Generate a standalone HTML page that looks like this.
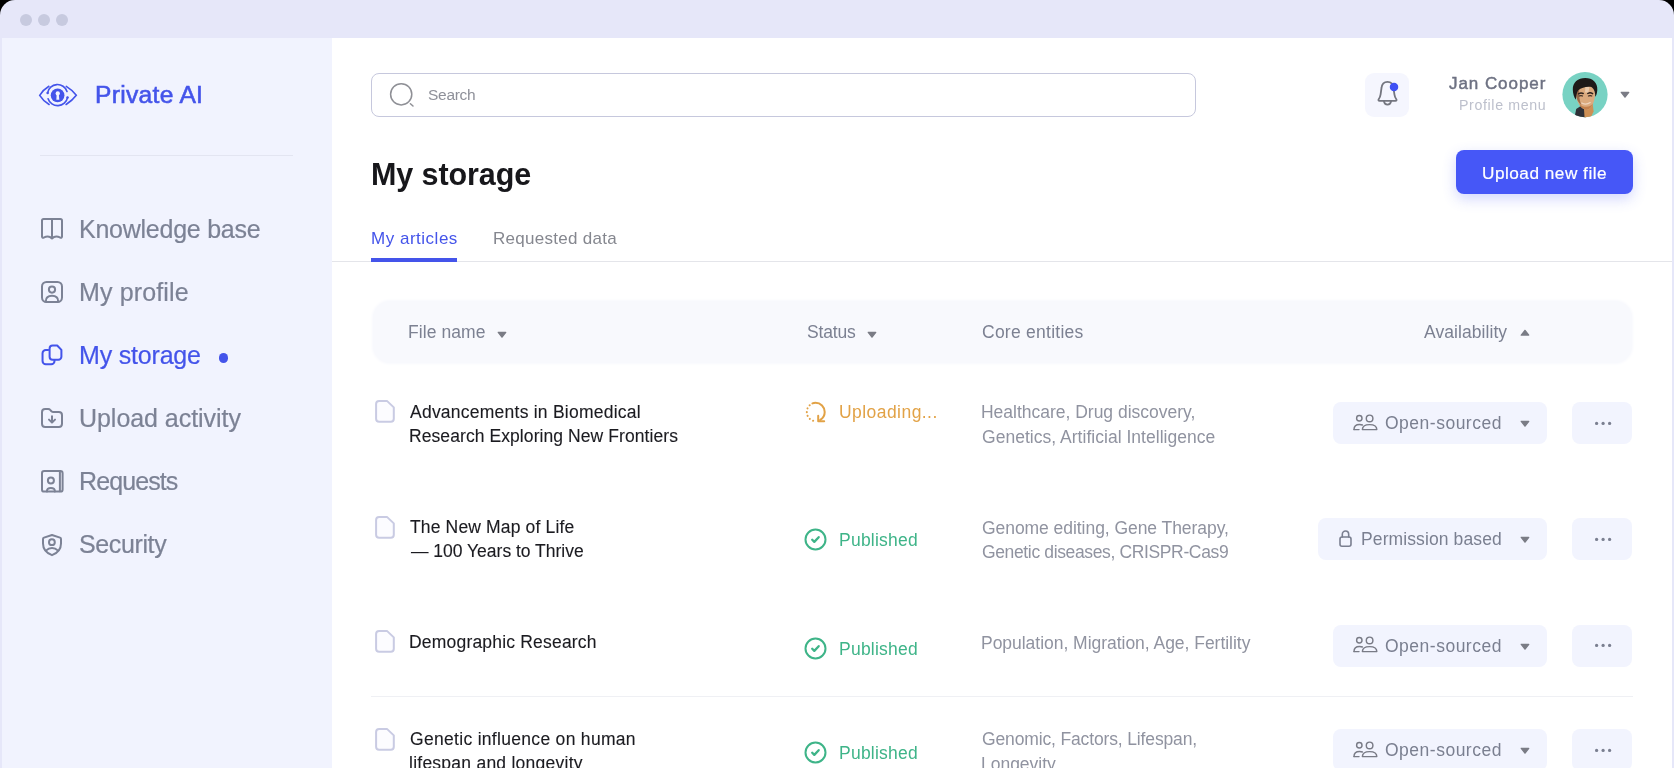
<!DOCTYPE html>
<html lang="en">
<head>
<meta charset="utf-8">
<title>Private AI – My storage</title>
<style>
*{box-sizing:border-box}
html,body{margin:0;padding:0}
body{width:1674px;height:768px;overflow:hidden;background:#000;font-family:"Liberation Sans",Arial,sans-serif;-webkit-font-smoothing:antialiased}
.window{position:absolute;left:0;top:0;width:1674px;height:820px;background:#E6E7F9;border-radius:15px 15px 0 0;overflow:hidden}
.titlebar i{position:absolute;top:14px;width:12px;height:12px;border-radius:50%;background:#C7CADF}
.sidebar{position:absolute;left:2px;top:38px;width:330px;height:800px;background:#F1F3FE}
.main{position:absolute;left:332px;top:38px;width:1340px;height:800px;background:#fff}
.t{position:absolute;white-space:pre;line-height:1;margin:0;font-weight:400;will-change:transform}
.abs,svg.i{position:absolute;display:block;overflow:visible}
.med{-webkit-text-stroke:0.45px currentColor}
.nv{-webkit-text-stroke:0.2px currentColor;text-decoration:none}
.nm{-webkit-text-stroke:0.12px currentColor}
.med2{-webkit-text-stroke:0.6px currentColor}
button{border:0;padding:0;margin:0;font:inherit}
.chip{position:absolute;background:#F2F4FE;border-radius:8px}
</style>
</head>
<body>
<div class="window">
<div class="titlebar"><i style="left:20px"></i><i style="left:38px"></i><i style="left:56px"></i></div>
<aside class="sidebar">
<svg class="i" style="left:35.5px;top:45px" width="40" height="24" viewBox="0 0 40 24" fill="none">
<g stroke="#4454EA" stroke-width="1.6" stroke-linecap="round" fill="none">
<path d="M10.9 3.3C7 5.7 3.9 8.7 1.7 12.3C3.9 15.9 7 18.9 11.1 21.5"/>
<path d="M28.3 3.4C32.2 5.8 35.8 8.9 38.3 12.3C35.8 15.7 32.2 18.8 28.1 21.5"/>
<path d="M9.6 9.9A10 9.85 0 0 1 29 8.4"/>
<path d="M29.5 14.6A10 9.85 0 0 1 10.1 15.7"/>
</g>
<circle cx="9.6" cy="9.9" r="1.25" fill="#4454EA"/><circle cx="29.5" cy="14.6" r="1.25" fill="#4454EA"/>
<circle cx="19.6" cy="12.3" r="6.85" fill="#4454EA"/>
<circle cx="19.75" cy="10.5" r="2.15" fill="#F1F3FE"/><path d="M18.7 11.2L18.3 16.7H21.3L20.8 11.2Z" fill="#F1F3FE"/>
</svg>
<span class="t med2" style="left:92.98px;top:45px;font-size:24.6px;color:#4454EA;letter-spacing:0.300px;">Private AI</span>
<div class="abs" style="left:38px;top:117px;width:253px;height:1px;background:#E3E5F1"></div>
<nav>
<svg class="i" style="left:38px;top:179px" width="24" height="24" viewBox="0 0 24 24" fill="none"><g stroke="#7C8295" stroke-width="2" stroke-linecap="round" stroke-linejoin="round"><path d="M3.6 2.1H20.4C21.3 2.1 22 2.8 22 3.7V19.5C22 20.5 21.2 21.1 20.3 20.7C17.6 19.3 14 19.5 12 21.4C10 19.5 6.4 19.3 3.7 20.7C2.8 21.1 2 20.5 2 19.5V3.7C2 2.8 2.7 2.1 3.6 2.1ZM12 2.1V21.2"/></g></svg>
<a class="t nv" style="left:76.55px;top:179px;font-size:25px;color:#7C8295;letter-spacing:-0.246px;">Knowledge base</a>
<svg class="i" style="left:38px;top:242px" width="24" height="24" viewBox="0 0 24 24" fill="none"><g stroke="#7C8295" stroke-width="2" stroke-linecap="round" stroke-linejoin="round"><rect x="2" y="2" width="20" height="20" rx="4.5"/><circle cx="12" cy="9.6" r="3.1"/><path d="M5.8 21.4C5.8 17.6 8.4 15.8 12 15.8S18.2 17.6 18.2 21.4"/></g></svg>
<a class="t nv" style="left:76.55px;top:242px;font-size:25px;color:#7C8295;letter-spacing:0.134px;">My profile</a>
<svg class="i" style="left:38px;top:305px" width="24" height="24" viewBox="0 0 24 24" fill="none"><g stroke="#4454EA" stroke-width="2" stroke-linecap="round" stroke-linejoin="round"><path d="M8.2 7H5.8C4 7 2.55 8.45 2.55 10.25V18.05C2.55 19.85 4 21.3 5.8 21.3H11.25C13.05 21.3 14.5 19.85 14.5 18.05V17.4"/><path d="M12.6 2.5H17.2L21.4 6.9V13.7C21.4 15.4 20 16.75 18.4 16.75H12.6C10.9 16.75 9.6 15.4 9.6 13.7V5.5C9.6 3.8 10.9 2.5 12.6 2.5Z"/></g></svg>
<a class="t nv" style="left:76.55px;top:305px;font-size:25px;color:#4454EA;letter-spacing:-0.188px;">My storage</a>
<svg class="i" style="left:38px;top:368.3px" width="24" height="24" viewBox="0 0 24 24" fill="none"><g stroke="#7C8295" stroke-width="2" stroke-linecap="round" stroke-linejoin="round"><path d="M2 6.2C2 4.4 3.4 3 5.2 3H8.2C9 3 9.7 3.3 10.2 3.9L11.4 5.2C11.9 5.8 12.6 6.1 13.4 6.1H18.8C20.6 6.1 22 7.5 22 9.3V17.8C22 19.6 20.6 21 18.8 21H5.2C3.4 21 2 19.6 2 17.8Z"/><path d="M12 10.2V16.4M9 13.6L12 16.6L15 13.6"/></g></svg>
<a class="t nv" style="left:76.94px;top:368px;font-size:25px;color:#7C8295;letter-spacing:-0.044px;">Upload activity</a>
<svg class="i" style="left:38px;top:431px" width="24" height="24" viewBox="0 0 24 24" fill="none"><g stroke="#7C8295" stroke-width="2" stroke-linecap="round" stroke-linejoin="round"><rect x="2" y="2" width="20.6" height="20.6" rx="2.2"/><path d="M19.9 2.4V22.2"/><circle cx="10.9" cy="11.6" r="3"/><path d="M7 22.4V21.8C7 20 8.6 19 10.9 19S14.8 20 14.8 21.8V22.4"/></g></svg>
<a class="t nv" style="left:76.55px;top:431px;font-size:25px;color:#7C8295;letter-spacing:-0.897px;">Requests</a>
<svg class="i" style="left:38px;top:494.6px" width="24" height="24" viewBox="0 0 24 24" fill="none"><g stroke="#7C8295" stroke-width="2" stroke-linecap="round" stroke-linejoin="round"><path d="M12 2L20 4.6C20.6 4.8 21 5.3 21 5.9V10.4C21 15.8 17.8 19.8 12 22.2C6.2 19.8 3 15.8 3 10.4V5.9C3 5.3 3.4 4.8 4 4.6Z"/><circle cx="11.9" cy="9.2" r="2.9"/><path d="M6.3 17.4C7.8 15.8 9.6 15 12 15S16.2 15.8 17.7 17.4"/></g></svg>
<a class="t nv" style="left:76.52px;top:494px;font-size:25px;color:#7C8295;letter-spacing:-0.375px;">Security</a>
<div class="abs" style="left:217px;top:315.3px;width:9.4px;height:9.4px;border-radius:50%;background:#4454EA"></div>
</nav>
</aside>
<main class="main">
<header>
<div class="abs" style="left:39px;top:35px;width:824.5px;height:44px;border:1px solid #C6C8DD;border-radius:8px;background:#fff"></div>
<svg class="i" style="left:56px;top:43px" width="28" height="28" viewBox="0 0 28 28" fill="none"><circle cx="13.2" cy="13.3" r="10.6" stroke="#8F9096" stroke-width="1.5"/><path d="M22.4 22.7L25 25" stroke="#8F9096" stroke-width="1.5" stroke-linecap="round"/></svg>
<span class="t" style="left:96.22px;top:49px;font-size:15.5px;color:#8E9099;letter-spacing:-0.291px;">Search</span>
<div class="abs" style="left:1033px;top:34.5px;width:44px;height:44px;background:#F5F6FE;border-radius:9px"></div>
<svg class="i" style="left:1043px;top:41px" width="26" height="30" viewBox="0 0 26 30" fill="none"><g stroke="#74767F" stroke-width="1.8" stroke-linecap="round" stroke-linejoin="round"><path d="M12.5 2.9C8.9 2.9 6.9 5.6 6.5 9L5.6 15.4C5.3 17.6 4.6 19 3.7 20.2C3.1 21 3.5 21.8 4.5 21.8H20.5C21.5 21.8 21.9 21 21.3 20.2C20.4 19 19.7 17.6 19.4 15.4L18.5 9C18.1 5.6 16.1 2.9 12.5 2.9Z"/><path d="M8.9 22.2C9.3 24.7 10.8 25.7 12.5 25.7S15.7 24.7 16.1 22.2"/></g><circle cx="19" cy="8.1" r="4.25" fill="#3F51F4"/></svg>
<span class="t med" style="left:1116.63px;top:37px;font-size:17px;color:#6D7182;letter-spacing:0.940px;">Jan Cooper</span>
<span class="t" style="left:1127.19px;top:60px;font-size:14.2px;color:#BDC0CC;letter-spacing:0.636px;">Profile menu</span>
<svg class="i" style="left:1230px;top:33.5px" width="46" height="46" viewBox="0 0 46 46" fill="none"><defs><clipPath id="av"><circle cx="23" cy="22.6" r="22.6"/></clipPath></defs>
<g clip-path="url(#av)"><rect width="46" height="46" fill="#78D2C3"/>
<path d="M12.4 46L14.2 37L21.8 32L24 46Z" fill="#2F3037"/>
<path d="M21.6 31H30.6L31.6 39.5L28.6 46H22.6Z" fill="#CE9055"/>
<path d="M14 22C14 15 18 12.6 23.6 12.6S33 15 33 22C33 30 29 37.8 24.6 37.8C19.4 37.8 14 30 14 22Z" fill="#DBAA7E"/>
<path d="M14 22C14 17 15.6 14.6 18 13.6C16.6 18 16.6 27 19.6 33.6C16 30.6 14 26 14 22Z" fill="#9A6A48"/>
<path d="M24.6 37.8C22 37.8 19 35.6 17 32C19.4 34 21.6 34.8 24.4 34.8S29 34 31 31.6C29.6 35.4 27 37.8 24.6 37.8Z" fill="#C4824E"/>
<path d="M10.8 17.6C10.6 10.4 16 6.1 23.2 6.1C30.6 6.1 35.7 10.6 35.3 18C35.1 21.4 34.3 23.8 33.2 24.8C33.4 20.6 32.4 17.4 29.8 15.2C25.6 14 19.6 15.6 16.2 18.2C14.6 20.4 14.2 24 13.9 27.8C12 25.4 10.9 21.6 10.8 17.6Z" fill="#1E1A19"/>
<path d="M16.6 21.8Q18.8 20.4 21.2 21.5M25.8 21.4Q28.2 20.2 30.6 21.6" stroke="#2B211C" stroke-width="1.5" stroke-linecap="round"/>
<path d="M17.2 24Q19 23.2 20.6 24M26.4 24Q28.2 23.2 29.8 24" stroke="#3A2A22" stroke-width="1.1" stroke-linecap="round"/>
<path d="M19.8 31Q24 33.6 28.2 30.6" stroke="#EFD5BF" stroke-width="1.2" stroke-linecap="round"/>
<path d="M23.4 15L27.4 15L26.4 20.4L23 20.4Z" fill="#F0D6BC" opacity=".75"/>
</g></svg>
<svg class="i" style="left:1287.8px;top:53.05px" width="10" height="7.5" viewBox="0 0 10 7.5" fill="none"><path d="M1.3 1.4H8.7L5 6.1Z" fill="#7A7C85" stroke="#7A7C85" stroke-width="1.4" stroke-linejoin="round"/></svg>
</header>
<h1 class="t" style="left:38.99px;top:121px;font-size:30.5px;color:#17171B;letter-spacing:-0.095px;font-weight:700;">My storage</h1>
<button class="abs btn" style="left:1124px;top:112px;width:177px;height:44px;background:#4657F7;border-radius:8px;box-shadow:0 5px 14px rgba(70,87,247,.24)"><span class="t nv" style="left:26.13px;top:15px;font-size:17.2px;color:#FFFFFF;letter-spacing:0.505px;">Upload new file</span></button>
<span class="t" style="left:38.97px;top:192px;font-size:17px;color:#4454EA;letter-spacing:0.513px;">My articles</span>
<span class="t" style="left:160.67px;top:192px;font-size:17px;color:#85878F;letter-spacing:0.291px;">Requested data</span>
<div class="abs" style="left:0px;top:223px;width:1340px;height:1px;background:#E4E5EA"></div>
<div class="abs" style="left:39px;top:220px;width:86.3px;height:4px;background:#4454EA"></div>
<section class="table">
<div class="abs thead" style="left:41px;top:262.5px;width:1258.5px;height:62.5px;background:#F8F9FD;border-radius:17px;box-shadow:0 0 3px 1px #F8F9FD"></div>
<span class="t" style="left:75.63px;top:286px;font-size:17.5px;color:#7C8192;letter-spacing:0.080px;">File name</span>
<span class="t" style="left:474.85px;top:286px;font-size:17.5px;color:#7C8192;letter-spacing:-0.164px;">Status</span>
<span class="t" style="left:650.28px;top:286px;font-size:17.5px;color:#7C8192;letter-spacing:0.252px;">Core entities</span>
<span class="t" style="left:1091.80px;top:286px;font-size:17.5px;color:#7C8192;letter-spacing:0.068px;">Availability</span>
<svg class="i" style="left:165px;top:292.65px" width="10" height="7.5" viewBox="0 0 10 7.5" fill="none"><path d="M1.3 1.4H8.7L5 6.1Z" fill="#7A7C85" stroke="#7A7C85" stroke-width="1.4" stroke-linejoin="round"/></svg>
<svg class="i" style="left:534.9px;top:292.75px" width="10" height="7.5" viewBox="0 0 10 7.5" fill="none"><path d="M1.3 1.4H8.7L5 6.1Z" fill="#7A7C85" stroke="#7A7C85" stroke-width="1.4" stroke-linejoin="round"/></svg>
<svg class="i" style="left:1188.3px;top:290.75px" width="10" height="7.5" viewBox="0 0 10 7.5" fill="none"><path d="M1.3 6.1H8.7L5 1.4Z" fill="#7A7C85" stroke="#7A7C85" stroke-width="1.4" stroke-linejoin="round"/></svg>
<article class="row">
<svg class="i" style="left:43.4px;top:361.6px" width="20" height="24" viewBox="0 0 20 24" fill="none"><path d="M4.1 1.1H12.2L18.8 7.4V18.8C18.8 20.5 17.5 21.8 15.8 21.8H4.1C2.4 21.8 1.1 20.5 1.1 18.8V4.1C1.1 2.4 2.4 1.1 4.1 1.1Z" fill="#FCFCFF" stroke="#C9CBE3" stroke-width="2" stroke-linejoin="round"/></svg>
<span class="t nm" style="left:78.40px;top:366px;font-size:17.5px;color:#1B1B20;letter-spacing:0.238px;">Advancements in Biomedical</span>
<span class="t nm" style="left:77.43px;top:390px;font-size:17.5px;color:#1B1B20;letter-spacing:0.078px;">Research Exploring New Frontiers</span>
<svg class="i" style="left:473.3px;top:362.5px" width="22" height="22" viewBox="0 0 22 22" fill="none"><g stroke="#E2A246" stroke-width="2" stroke-linecap="round" stroke-linejoin="round"><path d="M7.4 2.4C8.4 2 9.4 1.8 10.5 1.8C15.6 1.8 19.7 5.9 19.7 11C19.7 14.4 17.9 17.3 15.2 18.9"/><path d="M13.2 14.8V20.2H19.2"/><path d="M4.7 4.2C2.9 5.9 1.8 8.3 1.8 11C1.8 15.6 5.1 19.4 9.5 20.1" stroke-dasharray="0.1 3.7"/></g></svg>
<span class="t" style="left:507.11px;top:366px;font-size:17.5px;color:#E2A246;letter-spacing:0.444px;">Uploading...</span>
<span class="t" style="left:649.13px;top:366px;font-size:17.5px;color:#9093A0;letter-spacing:-0.013px;">Healthcare, Drug discovery,</span>
<span class="t" style="left:649.68px;top:391px;font-size:17.5px;color:#9093A0;letter-spacing:0.025px;">Genetics, Artificial Intelligence</span>
<button class="chip" style="left:1001.4px;top:364.1px;width:213.4px;height:42.3px;"><svg class="i" style="left:19.4px;top:11.5px" width="25" height="17" viewBox="0 0 25 17" fill="none"><g stroke="#797B86" stroke-width="1.45" stroke-linecap="round" stroke-linejoin="round"><circle cx="6.3" cy="4.2" r="2.7"/><circle cx="16.6" cy="4.4" r="3.3"/><path d="M9.4 15.6C9.4 12.2 12.4 10.6 16.6 10.6S23.8 12.2 23.8 15.6Z"/><path d="M1 15.6C1 12.4 3.2 10.4 6.6 10.4C7.6 10.4 8.6 10.6 9.4 11"/><path d="M1 15.6H6"/></g></svg><span class="t" style="left:51.48px;top:12.9px;font-size:17.5px;color:#7A7F90;letter-spacing:0.501px;">Open-sourced</span><svg class="i" style="left:186.6px;top:18.25px" width="10" height="7.5" viewBox="0 0 10 7.5" fill="none"><path d="M1.3 1.4H8.7L5 6.1Z" fill="#7A7C85" stroke="#7A7C85" stroke-width="1.4" stroke-linejoin="round"/></svg></button>
<button class="chip" style="left:1240.4px;top:364.1px;width:59.6px;height:42.3px;"><svg class="i" style="left:21.6px;top:18.6px" width="19" height="5" viewBox="0 0 19 5" fill="none"><g fill="#7A7F90"><circle cx="2.6" cy="2.4" r="1.6"/><circle cx="9.1" cy="2.4" r="1.6"/><circle cx="15.6" cy="2.4" r="1.6"/></g></svg></button>
</article>
<article class="row">
<svg class="i" style="left:43.4px;top:477.8px" width="20" height="24" viewBox="0 0 20 24" fill="none"><path d="M4.1 1.1H12.2L18.8 7.4V18.8C18.8 20.5 17.5 21.8 15.8 21.8H4.1C2.4 21.8 1.1 20.5 1.1 18.8V4.1C1.1 2.4 2.4 1.1 4.1 1.1Z" fill="#FCFCFF" stroke="#C9CBE3" stroke-width="2" stroke-linejoin="round"/></svg>
<span class="t nm" style="left:78.13px;top:481px;font-size:17.5px;color:#1B1B20;letter-spacing:0.151px;">The New Map of Life</span>
<span class="t nm" style="left:78.80px;top:505px;font-size:17.5px;color:#1B1B20;letter-spacing:-0.008px;">— 100 Years to Thrive</span>
<svg class="i" style="left:472.4px;top:490.4px" width="23" height="23" viewBox="0 0 23 23" fill="none"><circle cx="11.5" cy="11.5" r="10" stroke="#3EB488" stroke-width="2"/><path d="M8.2 11.8L10.3 13.9L14.7 9.2" stroke="#3EB488" stroke-width="2.3" stroke-linecap="round" stroke-linejoin="round"/></svg>
<span class="t" style="left:506.83px;top:494px;font-size:17.5px;color:#3EB488;letter-spacing:0.236px;">Published</span>
<span class="t" style="left:649.68px;top:482px;font-size:17.5px;color:#9093A0;letter-spacing:-0.053px;">Genome editing, Gene Therapy,</span>
<span class="t" style="left:649.68px;top:506px;font-size:17.5px;color:#9093A0;letter-spacing:-0.362px;">Genetic diseases, CRISPR-Cas9</span>
<button class="chip" style="left:985.9px;top:480px;width:228.9px;height:42.3px;"><svg class="i" style="left:21.5px;top:11.6px" width="13" height="17.4" viewBox="0 0 13 17.4" fill="none"><g stroke="#7A7F90" stroke-width="1.6" stroke-linecap="round" stroke-linejoin="round"><rect x="1" y="7" width="11" height="9.2" rx="2"/><path d="M3.3 7V4.4C3.3 2.5 4.7 1 6.5 1S9.7 2.5 9.7 4.4V7"/></g></svg><span class="t" style="left:43.03px;top:13px;font-size:17.5px;color:#7A7F90;letter-spacing:0.110px;">Permission based</span><svg class="i" style="left:202.1px;top:18.25px" width="10" height="7.5" viewBox="0 0 10 7.5" fill="none"><path d="M1.3 1.4H8.7L5 6.1Z" fill="#7A7C85" stroke="#7A7C85" stroke-width="1.4" stroke-linejoin="round"/></svg></button>
<button class="chip" style="left:1240.4px;top:480px;width:59.6px;height:42.3px;"><svg class="i" style="left:21.6px;top:18.6px" width="19" height="5" viewBox="0 0 19 5" fill="none"><g fill="#7A7F90"><circle cx="2.6" cy="2.4" r="1.6"/><circle cx="9.1" cy="2.4" r="1.6"/><circle cx="15.6" cy="2.4" r="1.6"/></g></svg></button>
</article>
<article class="row">
<svg class="i" style="left:43.4px;top:591.9px" width="20" height="24" viewBox="0 0 20 24" fill="none"><path d="M4.1 1.1H12.2L18.8 7.4V18.8C18.8 20.5 17.5 21.8 15.8 21.8H4.1C2.4 21.8 1.1 20.5 1.1 18.8V4.1C1.1 2.4 2.4 1.1 4.1 1.1Z" fill="#FCFCFF" stroke="#C9CBE3" stroke-width="2" stroke-linejoin="round"/></svg>
<span class="t nm" style="left:77.03px;top:596px;font-size:17.5px;color:#1B1B20;letter-spacing:0.195px;">Demographic Research</span>
<svg class="i" style="left:472.4px;top:598.8px" width="23" height="23" viewBox="0 0 23 23" fill="none"><circle cx="11.5" cy="11.5" r="10" stroke="#3EB488" stroke-width="2"/><path d="M8.2 11.8L10.3 13.9L14.7 9.2" stroke="#3EB488" stroke-width="2.3" stroke-linecap="round" stroke-linejoin="round"/></svg>
<span class="t" style="left:506.83px;top:603px;font-size:17.5px;color:#3EB488;letter-spacing:0.236px;">Published</span>
<span class="t" style="left:649.13px;top:597px;font-size:17.5px;color:#9093A0;letter-spacing:-0.028px;">Population, Migration, Age, Fertility</span>
<button class="chip" style="left:1001.4px;top:586.6px;width:213.4px;height:42.3px;"><svg class="i" style="left:19.4px;top:11.5px" width="25" height="17" viewBox="0 0 25 17" fill="none"><g stroke="#797B86" stroke-width="1.45" stroke-linecap="round" stroke-linejoin="round"><circle cx="6.3" cy="4.2" r="2.7"/><circle cx="16.6" cy="4.4" r="3.3"/><path d="M9.4 15.6C9.4 12.2 12.4 10.6 16.6 10.6S23.8 12.2 23.8 15.6Z"/><path d="M1 15.6C1 12.4 3.2 10.4 6.6 10.4C7.6 10.4 8.6 10.6 9.4 11"/><path d="M1 15.6H6"/></g></svg><span class="t" style="left:51.48px;top:13.4px;font-size:17.5px;color:#7A7F90;letter-spacing:0.501px;">Open-sourced</span><svg class="i" style="left:186.6px;top:18.25px" width="10" height="7.5" viewBox="0 0 10 7.5" fill="none"><path d="M1.3 1.4H8.7L5 6.1Z" fill="#7A7C85" stroke="#7A7C85" stroke-width="1.4" stroke-linejoin="round"/></svg></button>
<button class="chip" style="left:1240.4px;top:586.6px;width:59.6px;height:42.3px;"><svg class="i" style="left:21.6px;top:18.6px" width="19" height="5" viewBox="0 0 19 5" fill="none"><g fill="#7A7F90"><circle cx="2.6" cy="2.4" r="1.6"/><circle cx="9.1" cy="2.4" r="1.6"/><circle cx="15.6" cy="2.4" r="1.6"/></g></svg></button>
</article>
<div class="abs" style="left:39px;top:658px;width:1262px;height:1px;background:#EFF0F4"></div>
<article class="row">
<svg class="i" style="left:43.4px;top:689.6px" width="20" height="24" viewBox="0 0 20 24" fill="none"><path d="M4.1 1.1H12.2L18.8 7.4V18.8C18.8 20.5 17.5 21.8 15.8 21.8H4.1C2.4 21.8 1.1 20.5 1.1 18.8V4.1C1.1 2.4 2.4 1.1 4.1 1.1Z" fill="#FCFCFF" stroke="#C9CBE3" stroke-width="2" stroke-linejoin="round"/></svg>
<span class="t nm" style="left:77.58px;top:693px;font-size:17.5px;color:#1B1B20;letter-spacing:0.307px;">Genetic influence on human</span>
<span class="t nm" style="left:77.31px;top:717px;font-size:17.5px;color:#1B1B20;letter-spacing:0.247px;">lifespan and longevity</span>
<svg class="i" style="left:472.4px;top:702.9px" width="23" height="23" viewBox="0 0 23 23" fill="none"><circle cx="11.5" cy="11.5" r="10" stroke="#3EB488" stroke-width="2"/><path d="M8.2 11.8L10.3 13.9L14.7 9.2" stroke="#3EB488" stroke-width="2.3" stroke-linecap="round" stroke-linejoin="round"/></svg>
<span class="t" style="left:506.83px;top:707px;font-size:17.5px;color:#3EB488;letter-spacing:0.236px;">Published</span>
<span class="t" style="left:649.68px;top:693px;font-size:17.5px;color:#9093A0;letter-spacing:-0.143px;">Genomic, Factors, Lifespan,</span>
<span class="t" style="left:649.13px;top:718px;font-size:17.5px;color:#9093A0;letter-spacing:-0.018px;">Longevity</span>
<button class="chip" style="left:1001.4px;top:691.2px;width:213.4px;height:42.3px;"><svg class="i" style="left:19.4px;top:11.5px" width="25" height="17" viewBox="0 0 25 17" fill="none"><g stroke="#797B86" stroke-width="1.45" stroke-linecap="round" stroke-linejoin="round"><circle cx="6.3" cy="4.2" r="2.7"/><circle cx="16.6" cy="4.4" r="3.3"/><path d="M9.4 15.6C9.4 12.2 12.4 10.6 16.6 10.6S23.8 12.2 23.8 15.6Z"/><path d="M1 15.6C1 12.4 3.2 10.4 6.6 10.4C7.6 10.4 8.6 10.6 9.4 11"/><path d="M1 15.6H6"/></g></svg><span class="t" style="left:51.48px;top:12.8px;font-size:17.5px;color:#7A7F90;letter-spacing:0.501px;">Open-sourced</span><svg class="i" style="left:186.6px;top:18.25px" width="10" height="7.5" viewBox="0 0 10 7.5" fill="none"><path d="M1.3 1.4H8.7L5 6.1Z" fill="#7A7C85" stroke="#7A7C85" stroke-width="1.4" stroke-linejoin="round"/></svg></button>
<button class="chip" style="left:1240.4px;top:691.2px;width:59.6px;height:42.3px;"><svg class="i" style="left:21.6px;top:18.6px" width="19" height="5" viewBox="0 0 19 5" fill="none"><g fill="#7A7F90"><circle cx="2.6" cy="2.4" r="1.6"/><circle cx="9.1" cy="2.4" r="1.6"/><circle cx="15.6" cy="2.4" r="1.6"/></g></svg></button>
</article>
</section>
</main>
</div>
</body>
</html>
